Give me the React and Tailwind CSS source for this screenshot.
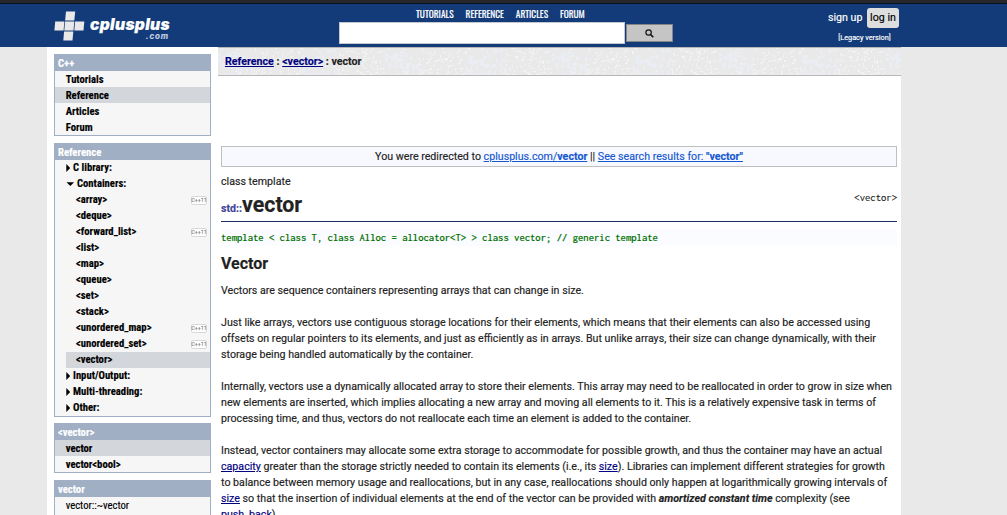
function Logo() {
  return (
    <div className="flex w-[120px] items-start pt-[7px]">
      <svg width="31" height="31" viewBox="0 0 31 31" fill="#e9e9ea">
        <path d="M12 .4h9.2l-.9 9.2h-9.2z" />
        <path d="M1.2 10.4h9.2l-.8 9.2H.4z" />
        <path d="M11.1 10.4h9.2l-.8 9.2h-9.2z" />
        <path d="M21.1 10.4h9.2l-.8 9.2h-9.2z" />
        <path d="M10.1 20.4h9.2l-.8 9.2H9.3z" />
      </svg>
      <div className="ml-[5px] flex w-[80px] flex-col items-end font-['Inter',sans-serif] text-white italic">
        <div className="mt-[6px] text-[15.6px] leading-[15px] font-black tracking-[0.3px] whitespace-nowrap">cplusplus</div>
        <div className="mr-[1px] text-[8px] leading-[8px] font-bold tracking-[0.9px] text-[#c6d1e2]">.com</div>
      </div>
    </div>
  );
}

function Texture() {
  let seed = 7919;
  const rnd = () => {
    seed = (seed * 16807) % 2147483647;
    return seed / 2147483647;
  };
  const marks = Array.from({ length: 300 }, () => {
    const wide = rnd() > 0.5;
    const x = Math.floor(rnd() * 166);
    const y = Math.floor(rnd() * 27);
    return { x, y, w: wide ? 1 + Math.ceil(rnd() * 2) : 1, h: wide ? 1 : 1 + Math.ceil(rnd() * 2), blue: x % 83 < 34 && rnd() > 0.15 };
  });
  return (
    <svg className="absolute inset-0 h-full w-full">
      <defs>
        <pattern id="speckle" width="167" height="28" patternUnits="userSpaceOnUse">
          {marks.map((m, i) => (
            <rect key={i} x={m.x} y={m.y} width={m.w + (m.blue ? 1 : 0)} height={m.h + (m.blue ? 1 : 0)} fill={m.blue ? "#eaedf4" : "#f3f3f3"} />
          ))}
        </pattern>
      </defs>
      <rect width="100%" height="100%" fill="url(#speckle)" />
    </svg>
  );
}

function Box({ title, className = "", children }) {
  return (
    <section className={`border border-[#a1afc5] bg-[#f6f6f6] ${className}`}>
      <h3 className="h-4 bg-[#a1afc5] pl-[3px] leading-[17px] font-bold text-white">{title}</h3>
      {children}
    </section>
  );
}

function Item({ children, active, light }) {
  return (
    <div className={`h-4 pl-[10.7px] leading-[18px] ${light ? "font-normal" : "font-bold"} ${active ? "bg-[#d3d6db]" : ""}`}>{children}</div>
  );
}

function Group({ children, open }) {
  return (
    <div className="flex h-4 items-center pl-[11px] font-bold">
      {open ? (
        <svg width="11" height="8" viewBox="0 0 11 8"><path d="M.5 2.3h7.6L4.3 6.1z" /></svg>
      ) : (
        <svg width="7" height="8" viewBox="0 0 7 8"><path d="M.3 0v8L4.2 4z" /></svg>
      )}
      <span>{children}</span>
    </div>
  );
}

function Header({ name, cpp11, active }) {
  return (
    <div className={`ml-[11px] flex h-4 items-center justify-between pr-[3px] pl-[10px] font-bold ${active ? "bg-[#d3d6db]" : ""}`}>
      <span>{name}</span>
      {cpp11 && (
        <span className="flex h-[9px] w-4 items-center justify-center rounded-[2px] border border-[#d8d8d8] bg-white font-['Roboto_Condensed',sans-serif] text-[6px] leading-none font-normal text-[#888]">C++11</span>
      )}
    </div>
  );
}

const containers = [
  ["<array>", true], ["<deque>"], ["<forward_list>", true], ["<list>"], ["<map>"], ["<queue>"], ["<set>"], ["<stack>"],
  ["<unordered_map>", true], ["<unordered_set>", true], ["<vector>", false, true],
];

function Link({ children }) {
  return <a className="text-[#000080] underline">{children}</a>;
}

export default function App() {
  return (
    <div className="flex h-[515px] w-[1007px] flex-col overflow-hidden bg-[#e9e9e9] font-['Roboto',sans-serif] text-[10.667px] leading-4 text-[#222] [-webkit-text-stroke:0.15px]">
      <div className="h-1 shrink-0 border-b border-[#0b1220] bg-[#27272b]" />
      <header className="flex h-[43px] shrink-0 bg-[#133b79] pl-[54px] text-white">
        <Logo />
        <div className="ml-[165px] w-[334px]">
          <nav className="flex h-[18px] items-center gap-3 pl-[77px] font-['Oswald',sans-serif] text-[9.333px] leading-[18px] font-[450] pt-[2px]">
            <a>TUTORIALS</a><a>REFERENCE</a><a>ARTICLES</a><a>FORUM</a>
          </nav>
          <div className="flex items-center gap-px">
            <div className="h-[22px] w-[286px] border border-[#c4c8cf] bg-white" />
            <div className="flex h-[18px] w-[47px] items-center justify-center border border-[#858585] bg-[#c5c5c5]">
              <svg width="9" height="9" viewBox="0 0 9 9" fill="none" stroke="#111">
                <circle cx="3.6" cy="3.5" r="2.7" strokeWidth="1.2" />
                <path d="M5.4 5.4l2.9 2.9" strokeWidth="1.6" />
              </svg>
            </div>
          </div>
        </div>
        <div className="ml-[155px] flex w-[71px] flex-col pt-1">
          <div className="flex h-5 items-center gap-1 text-[10.667px]">
            <span className="w-[35px] whitespace-nowrap">sign up</span>
            <span className="flex h-5 w-8 items-center justify-center rounded-[3px] bg-[#dedede] whitespace-nowrap text-black">log in</span>
          </div>
          <div className="mt-[5px] w-[73px] text-center text-[7.3px] leading-[9px] font-[450] whitespace-nowrap">[Legacy version]</div>
        </div>
      </header>

      <div className="ml-[47px] flex min-h-0 w-[854px] flex-1 bg-white">
        <aside className="w-[171px] shrink-0 pt-[7px] pr-[7px] pl-[7px] font-['Roboto_Condensed',sans-serif] text-black">
          <Box title="C++">
            <Item>Tutorials</Item>
            <Item active>Reference</Item>
            <Item>Articles</Item>
            <Item>Forum</Item>
          </Box>
          <Box title="Reference" className="mt-[7px]">
            <Group>C library:</Group>
            <Group open>Containers:</Group>
            {containers.map(([name, cpp11, active]) => (
              <Header key={name} name={name} cpp11={cpp11} active={active} />
            ))}
            <Group>Input/Output:</Group>
            <Group>Multi-threading:</Group>
            <Group>Other:</Group>
          </Box>
          <Box title="<vector>" className="mt-[6px]">
            <Item active>vector</Item>
            <Item>{"vector<bool>"}</Item>
          </Box>
          <Box title="vector" className="mt-[7px] pb-4">
            <Item light>vector::~vector</Item>
          </Box>
        </aside>

        <main className="w-[683px] shrink-0">
          <div className="relative h-[29px] border-y border-[#b7b7b7] bg-[#e9e9e9]">
            <Texture />
            <div className="relative pl-[7px] leading-[27px] font-bold">
              <Link>Reference</Link> : <Link>{"<vector>"}</Link> : vector
            </div>
          </div>
          <div className="pr-1 pl-[3px]">
            <div className="mt-[70px] h-[21px] border border-[#bfbfbf] bg-[#f8f9ff] text-center leading-[19px]">
              You were redirected to <a className="text-[#1558d0] underline">cplusplus.com/<b>vector</b></a> || <a className="text-[#1558d0] underline">See search results for: <b>"vector"</b></a>
            </div>
            <div className="mt-[7px] h-4">class template</div>
            <div className="flex h-8 justify-between border-b border-[#1f2f66]">
              <h1 className="flex items-baseline font-bold">
                <span className="text-[#444499]">std::</span>
                <span className="text-[21.333px] leading-[30px]">vector</span>
              </h1>
              <span className="font-['Inconsolata',monospace]">{"<vector>"}</span>
            </div>
            <pre className="mt-2 h-4 bg-[#fbfcff] font-['Inconsolata',monospace] text-[10.667px] leading-4 font-medium text-[#007000]">{"template < class T, class Alloc = allocator<T> > class vector; // generic template"}</pre>
            <h2 className="mt-[6px] h-6 text-[16px] leading-6 font-bold">Vector</h2>
            <p className="mt-[7px]">Vectors are sequence containers representing arrays that can change in size.</p>
            <p className="mt-4 whitespace-nowrap">
              Just like arrays, vectors use contiguous storage locations for their elements, which means that their elements can also be accessed using<br />
              offsets on regular pointers to its elements, and just as efficiently as in arrays. But unlike arrays, their size can change dynamically, with their<br />
              storage being handled automatically by the container.
            </p>
            <p className="mt-4 whitespace-nowrap">
              Internally, vectors use a dynamically allocated array to store their elements. This array may need to be reallocated in order to grow in size when<br />
              new elements are inserted, which implies allocating a new array and moving all elements to it. This is a relatively expensive task in terms of<br />
              processing time, and thus, vectors do not reallocate each time an element is added to the container.
            </p>
            <p className="mt-4 whitespace-nowrap">
              Instead, vector containers may allocate some extra storage to accommodate for possible growth, and thus the container may have an actual<br />
              <Link>capacity</Link> greater than the storage strictly needed to contain its elements (i.e., its <Link>size</Link>). Libraries can implement different strategies for growth<br />
              to balance between memory usage and reallocations, but in any case, reallocations should only happen at logarithmically growing intervals of<br />
              <Link>size</Link> so that the insertion of individual elements at the end of the vector can be provided with <b><i>amortized constant time</i></b> complexity (see<br />
              <Link>push_back</Link>).
            </p>
          </div>
        </main>
      </div>
    </div>
  );
}
